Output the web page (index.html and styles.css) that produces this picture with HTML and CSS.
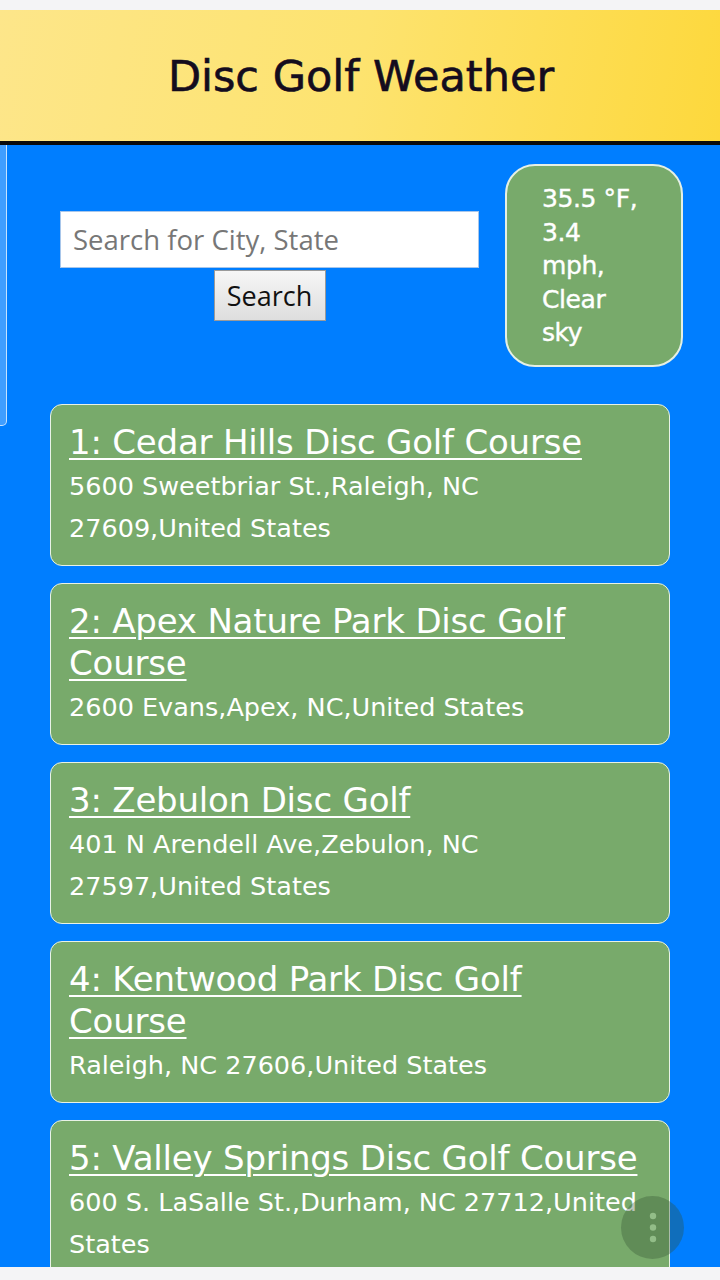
FILE: index.html
```html
<!DOCTYPE html>
<html lang="en">
<head>
<meta charset="utf-8">
<title>Disc Golf Weather</title>
<link rel="stylesheet" href="styles.css">
</head>
<body>
<div class="topbar"></div>
<header class="header">
  <h1 class="title">Disc Golf Weather</h1>
</header>
<main class="main">
  <div class="edge-scroll"></div>
  <section class="search-row">
    <form class="search-form">
      <input class="search-input" type="text" placeholder="Search for City, State">
      <button class="search-btn" type="button">Search</button>
    </form>
    <div class="weather">35.5 °F, 3.4 mph, Clear sky</div>
  </section>
  <ul class="courses">
    <li class="card">
      <a class="card-title" href="#">1: Cedar Hills Disc Golf Course </a>
      <p class="card-addr">5600 Sweetbriar St.,Raleigh, NC 27609,United States</p>
    </li>
    <li class="card">
      <a class="card-title" href="#">2: Apex Nature Park Disc Golf Course </a>
      <p class="card-addr">2600 Evans,Apex, NC,United States</p>
    </li>
    <li class="card">
      <a class="card-title" href="#">3: Zebulon Disc Golf </a>
      <p class="card-addr">401 N Arendell Ave,Zebulon, NC 27597,United States</p>
    </li>
    <li class="card">
      <a class="card-title" href="#">4: Kentwood Park Disc Golf Course </a>
      <p class="card-addr">Raleigh, NC 27606,United States</p>
    </li>
    <li class="card">
      <a class="card-title" href="#">5: Valley Springs Disc Golf Course</a>
      <p class="card-addr">600 S. LaSalle St.,Durham, NC 27712,United States</p>
    </li>
  </ul>
  <button class="fab" type="button" aria-label="More">
    <svg width="8" height="32" viewBox="0 0 8 32"><circle cx="4" cy="4" r="3.2" fill="#92bd88"/><circle cx="4" cy="15.5" r="3.2" fill="#92bd88"/><circle cx="4" cy="27" r="3.2" fill="#92bd88"/></svg>
  </button>
</main>
<div class="bottombar"></div>
</body>
</html>
```
FILE: styles.css
```css
html, body {
  margin: 0;
  padding: 0;
  height: 1280px;
  overflow: hidden;
}
body {
  display: flex;
  flex-direction: column;
  background: #f4f4f6;
  font-family: "DejaVu Sans", sans-serif;
}
.topbar {
  height: 10px;
  flex: none;
  background: #f4f4f6;
}
.header {
  flex: none;
  height: 131px;
  border-bottom: 4px solid #0a0a0a;
  background: linear-gradient(100deg, #fde68a 0%, #fde36f 50%, #fdd83c 100%);
  display: flex;
  align-items: center;
  justify-content: center;
}
.title {
  margin: 0;
  font-family: "DejaVu Sans", sans-serif;
  font-weight: 400;
  font-size: 43px;
  color: #140c1e;
  letter-spacing: 0;
  -webkit-text-stroke: 0.6px #140c1e;
  padding-left: 2px;
  margin-top: 1px;
}
.main {
  flex: 1;
  position: relative;
  overflow: hidden;
  background: #007eff;
}
.edge-scroll {
  position: absolute;
  left: -4px;
  top: -21px;
  width: 9px;
  height: 300px;
  border-radius: 5px;
  border: 1px solid rgba(255,255,255,0.7);
  background: rgba(255,255,255,0.25);
}
.search-row {
  display: flex;
  align-items: center;
  padding: 19px 0 0 60px;
  gap: 26px;
}
.search-form {
  display: flex;
  flex-direction: column;
  align-items: center;
  gap: 2px;
  margin: 0;
}
.search-input {
  box-sizing: border-box;
  width: 419px;
  height: 57px;
  margin: 0;
  border: 1px solid #a8c6ea;
  background: #fff;
  padding: 0 12px;
  font-family: "Open Sans", sans-serif;
  font-size: 27.5px;
  color: #333;
}
.search-input::placeholder {
  color: #777;
}
.search-btn {
  box-sizing: border-box;
  width: 112px;
  height: 51px;
  margin: 0;
  border: 1px solid #9a9a9a;
  background: linear-gradient(#f6f6f6, #dedede);
  font-family: "Open Sans", sans-serif;
  font-size: 27px;
  color: #111;
  padding: 0;
}
.weather {
  box-sizing: border-box;
  width: 178px;
  height: 203px;
  padding: 16px 34px 0 35px;
  border: 2px solid #e6f0e4;
  border-radius: 30px;
  background: #78aa6b;
  color: #fff;
  font-weight: 400;
  -webkit-text-stroke: 0.4px #fff;
  font-size: 25px;
  line-height: 33.5px;
  letter-spacing: -0.4px;
}
.courses {
  list-style: none;
  margin: 37px 0 0 50px;
  padding: 0;
  width: 620px;
  display: flex;
  flex-direction: column;
  gap: 17px;
}
.card {
  box-sizing: border-box;
  padding: 16px 24px 16px 18px;
  border: 1px solid #e8f2e6;
  border-radius: 12px;
  background: #78aa6b;
  color: #fff;
}
.card-title {
  display: block;
  color: #fff;
  font-size: 34px;
  line-height: 42px;
  text-decoration: underline;
  text-decoration-thickness: 2px;
  text-underline-offset: 4px;
  letter-spacing: -0.2px;
}
.card-addr {
  margin: 2px 0 0 0;
  font-size: 25.5px;
  line-height: 42px;
  letter-spacing: 0;
}
.fab {
  position: absolute;
  left: 621px;
  top: 1051px;
  width: 63px;
  height: 63px;
  border-radius: 50%;
  border: none;
  padding: 0;
  background: rgba(50, 80, 50, 0.33);
  display: flex;
  align-items: center;
  justify-content: center;
}
.bottombar {
  height: 13px;
  flex: none;
  background: #f4f4f6;
}
```
